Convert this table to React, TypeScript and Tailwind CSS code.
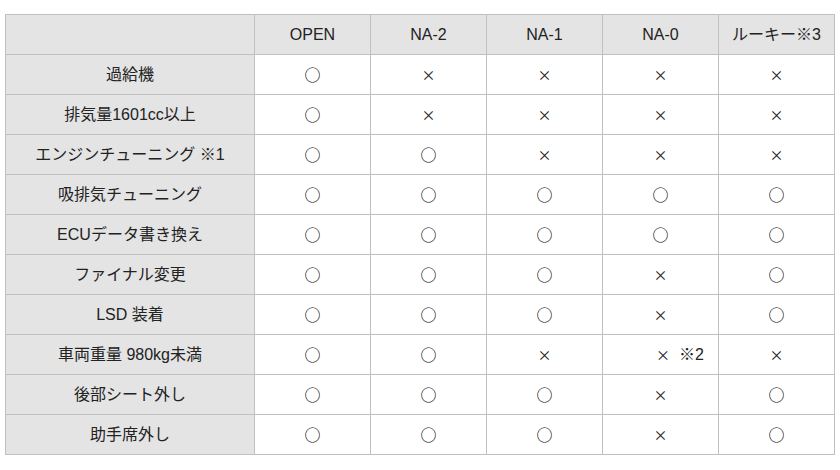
const cols = ["OPEN", "NA-2", "NA-1", "NA-0", "ルーキー※3"];

const rows: { label: string; cells: string[] }[] = [
  { label: "過給機", cells: ["○", "×", "×", "×", "×"] },
  { label: "排気量1601cc以上", cells: ["○", "×", "×", "×", "×"] },
  { label: "エンジンチューニング ※1", cells: ["○", "○", "×", "×", "×"] },
  { label: "吸排気チューニング", cells: ["○", "○", "○", "○", "○"] },
  { label: "ECUデータ書き換え", cells: ["○", "○", "○", "○", "○"] },
  { label: "ファイナル変更", cells: ["○", "○", "○", "×", "○"] },
  { label: "LSD 装着", cells: ["○", "○", "○", "×", "○"] },
  { label: "車両重量 980kg未満", cells: ["○", "○", "×", "×※2", "×"] },
  { label: "後部シート外し", cells: ["○", "○", "○", "×", "○"] },
  { label: "助手席外し", cells: ["○", "○", "○", "×", "○"] },
];

const cjk = { fontFamily: '"Noto Sans CJK JP", sans-serif' };

function Mark({ v }: { v: string }) {
  if (v === "○") {
    return (
      <span style={cjk} className="text-black text-[16px]">
        ○
      </span>
    );
  }
  return (
    <span style={cjk} className="text-[#222] text-[14px]">
      ×
    </span>
  );
}

export default function App() {
  return (
    <div
      className="w-[840px] h-[470px] bg-white pl-[5px] pt-[14px] text-[#222] text-[16px]"
      style={{ fontFamily: '"Liberation Sans", "Noto Sans CJK JP", sans-serif' }}
    >
      <table className="table-fixed border-collapse w-[830px]">
        <colgroup>
          <col className="w-[249px]" />
          {cols.map((c) => (
            <col key={c} className="w-[116px]" />
          ))}
        </colgroup>
        <thead>
          <tr>
            <th className="h-[40px] border border-[#c0c0c0] bg-[#e4e4e4]" />
            {cols.map((c) => (
              <th
                key={c}
                className="h-[40px] border border-[#c0c0c0] bg-[#e4e4e4] font-normal text-center p-0"
              >
                {c}
              </th>
            ))}
          </tr>
        </thead>
        <tbody>
          {rows.map((r) => (
            <tr key={r.label}>
              <td className="h-[40px] border border-[#c0c0c0] bg-[#e4e4e4] text-center p-0">
                {r.label}
              </td>
              {r.cells.map((v, i) =>
                v === "×※2" ? (
                  <td key={i} className="h-[40px] border border-[#c0c0c0] text-left pl-[53px]">
                    <Mark v="×" />
                    <span className="ml-[9px]">※2</span>
                  </td>
                ) : (
                  <td key={i} className="h-[40px] border border-[#c0c0c0] text-center p-0">
                    <Mark v={v} />
                  </td>
                )
              )}
            </tr>
          ))}
        </tbody>
      </table>
    </div>
  );
}
